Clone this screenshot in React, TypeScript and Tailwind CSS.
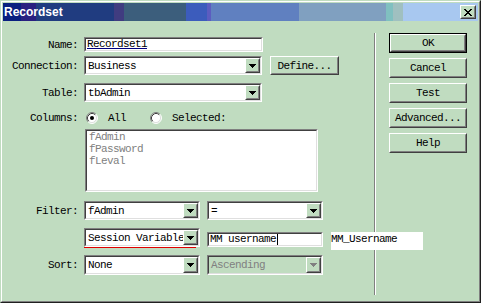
import type { ReactNode } from 'react'

function Sunken({ className = '', inner = 'bg-white', children }: { className?: string; inner?: string; children?: ReactNode }) {
  return (
    <div className={`shrink-0 border border-t-[#808080] border-l-[#808080] border-r-white border-b-white ${className}`}>
      <div className={`h-full w-full border border-t-[#404040] border-l-[#404040] border-r-[#dfdfdf] border-b-[#dfdfdf] ${inner}`}>
        {children}
      </div>
    </div>
  )
}

function Raised({ className = '', children }: { className?: string; children?: ReactNode }) {
  return (
    <div className={`shrink-0 border border-t-white border-l-white border-r-[#404040] border-b-[#404040] bg-[#c0dcc0] ${className}`}>
      <div className="h-full w-full border border-t-[#c0dcc0] border-l-[#c0dcc0] border-r-[#808080] border-b-[#808080] flex items-center justify-center">
        {children}
      </div>
    </div>
  )
}

function Arrow({ disabled = false }: { disabled?: boolean }) {
  return (
    <svg width="7" height="4" viewBox="0 0 7 4" className="block">
      <path d="M0 0h7v1h-1v1h-1v1h-1v1h-1v-1h-1v-1h-1v-1h-1z" fill={disabled ? '#808080' : '#000'} />
    </svg>
  )
}

function Combo({ text, width, height = 'h-[19px]', disabled = false }: { text: string; width: string; height?: string; disabled?: boolean }) {
  return (
    <Sunken className={`${width} ${height}`} inner={disabled ? 'bg-[#c0dcc0]' : 'bg-white'}>
      <div className="flex h-full items-center">
        <span className={`flex-1 min-w-0 overflow-hidden whitespace-nowrap pl-[2px] ${disabled ? 'text-[#808080]' : ''}`}>{text}</span>
        <Raised className="w-[15px] h-full">
          <Arrow disabled={disabled} />
        </Raised>
      </div>
    </Sunken>
  )
}

function Radio({ checked }: { checked: boolean }) {
  return (
    <svg width="12" height="12" viewBox="0 0 12 12" className="block shrink-0">
      <circle cx="6" cy="6" r="5" fill="#fff" />
      <path d="M2.11 9.89A5.5 5.5 0 0 1 9.89 2.11" stroke="#808080" fill="none" />
      <path d="M9.89 2.11A5.5 5.5 0 0 1 2.11 9.89" stroke="#fff" fill="none" />
      <path d="M2.82 9.18A4.5 4.5 0 0 1 9.18 2.82" stroke="#404040" fill="none" />
      <path d="M9.18 2.82A4.5 4.5 0 0 1 2.82 9.18" stroke="#dfdfdf" fill="none" />
      {checked && <circle cx="6" cy="6" r="2" fill="#000" />}
    </svg>
  )
}

function Label({ children }: { children: ReactNode }) {
  return <span className="w-[75px] shrink-0 text-right mr-[6px] whitespace-nowrap">{children}</span>
}

const buttons = ['OK', 'Cancel', 'Test', 'Advanced...', 'Help']

export default function App() {
  return (
    <div className="w-[481px] h-[303px] bg-[#c0dcc0] border border-t-[#c0dcc0] border-l-[#c0dcc0] border-r-[#202020] border-b-[#202020] font-['Liberation_Mono',monospace] text-[11px] leading-[12px] tracking-[-0.6px] text-black">
      <div className="h-full w-full border border-t-white border-l-white border-r-[#808080] border-b-[#808080] p-px flex flex-col">
        {/* title bar */}
        <div className="h-[18px] shrink-0 flex items-start bg-[linear-gradient(to_right,#0a2080_0_18px,#2a2080_18px_33px,#203c80_33px_111px,#403c80_111px_121px,#3c5e7c_121px_183px,#3c5cbc_183px_204px,#5c5cc0_204px_208px,#6080c0_208px_296px,#80a0c0_296px_383px,#80c0c0_383px_390px,#a0c0c0_390px_400px,#a8c8f0_400px)]">
          <span className="pl-[1px] pt-[2px] font-['Liberation_Sans',sans-serif] font-bold text-[12px] leading-[14px] tracking-normal text-white">Recordset</span>
          <div className="flex-1" />
          <Raised className="w-[16px] h-[14px] mt-[2px] mr-[2px]">
            <svg width="8" height="7" viewBox="0 0 8 7" className="block">
              <path d="M0 0h2v1h-2zM6 0h2v1h-2zM1 1h2v1h-2zM5 1h2v1h-2zM2 2h4v1h-4zM3 3h2v1h-2zM2 4h4v1h-4zM1 5h2v1h-2zM5 5h2v1h-2zM0 6h2v1h-2zM6 6h2v1h-2z" fill="#000" />
            </svg>
          </Raised>
        </div>

        <div className="flex flex-1">
          {/* form */}
          <div className="w-[371px] shrink-0 flex flex-col">
            <div className="flex items-center mt-[16px] h-[15px]">
              <Label>Name:</Label>
              <Sunken className="w-[179px] h-[15px]">
                <div className="pl-[1px] leading-[11px] underline decoration-[#000080]">Recordset1</div>
              </Sunken>
            </div>

            <div className="flex items-center mt-[4px] h-[19px]">
              <Label>Connection:</Label>
              <Combo text="Business" width="w-[178px]" />
              <Raised className="ml-[8px] w-[69px] h-[19px]">Define...</Raised>
            </div>

            <div className="flex items-center mt-[8px] h-[19px]">
              <Label>Table:</Label>
              <Combo text="tbAdmin" width="w-[178px]" />
            </div>

            <div className="flex items-center mt-[10px] h-[12px]">
              <span className="w-[75px] shrink-0 text-right whitespace-nowrap">Columns:</span>
              <span className="ml-[8px]"><Radio checked /></span>
              <span className="ml-[10px]">All</span>
              <span className="ml-[24px]"><Radio checked={false} /></span>
              <span className="ml-[10px]">Selected:</span>
            </div>

            <Sunken className="ml-[82px] mt-[5px] w-[233px] h-[63px]">
              <div className="pl-[2px] text-[#808080]">
                <div>fAdmin</div>
                <div>fPassword</div>
                <div>fLeval</div>
              </div>
            </Sunken>

            <div className="flex items-center mt-[9px] h-[19px]">
              <Label>Filter:</Label>
              <Combo text="fAdmin" width="w-[116px]" />
              <div className="ml-[7px] shrink-0">
                <Combo text="=" width="w-[116px]" />
              </div>
            </div>

            <div className="flex items-start mt-[8px] h-[19px] pl-[81px]">
              <div className="relative shrink-0">
                <Combo text="Session Variable" width="w-[116px]" />
                <div className="absolute left-0 top-full w-[112px] h-px bg-[#e00000]" />
              </div>
              <Sunken className="ml-[7px] mt-[4px] w-[116px] h-[15px]">
                <div className="flex items-center h-full pl-[1px] leading-[11px]">
                  <span className="whitespace-nowrap">MM username</span>
                  <span className="ml-px w-px h-[11px] shrink-0 bg-black" />
                </div>
              </Sunken>
              <div className="relative z-10 shrink-0 ml-[8px] mt-[4px] w-[92px] h-[18px] bg-white pt-[1px] whitespace-nowrap">MM_Username</div>
            </div>

            <div className="flex items-center mt-[8px] h-[20px]">
              <Label>Sort:</Label>
              <Combo text="None" width="w-[116px]" height="h-[20px]" />
              <div className="ml-[7px] shrink-0">
                <Combo text="Ascending" width="w-[116px]" height="h-[20px]" disabled />
              </div>
            </div>
          </div>

          {/* separator */}
          <div className="mt-[12px] h-[262px] w-[2px] shrink-0 border-l border-l-[#808080] border-r border-r-white" />

          {/* buttons */}
          <div className="ml-[13px] pt-[12px] flex flex-col gap-[5px]">
            {buttons.map((b) =>
              b === 'OK' ? (
                <div key={b} className="w-[78px] h-[20px] border border-black">
                  <Raised className="w-full h-full">{b}</Raised>
                </div>
              ) : (
                <Raised key={b} className="w-[78px] h-[20px]">{b}</Raised>
              )
            )}
          </div>
        </div>
      </div>
    </div>
  )
}
